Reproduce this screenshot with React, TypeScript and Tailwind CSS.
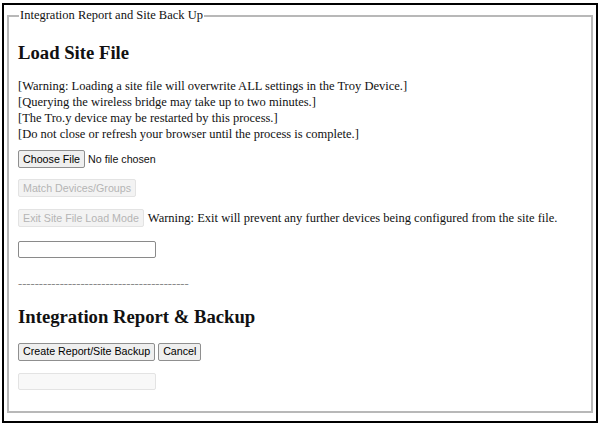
import React from "react";

const serif = "font-['Times_New_Roman','Liberation_Serif',serif]";
const sans = "font-['Arial','Liberation_Sans',sans-serif]";

function Btn({ children, disabled }: { children: React.ReactNode; disabled?: boolean }) {
  return (
    <button
      type="button"
      disabled={disabled}
      className={
        `${sans} h-[18px] rounded-[2px] border px-[4px] text-[10.7px] leading-none ` +
        (disabled
          ? "border-[#e3e3e3] bg-[#f3f3f3] text-[#b5b5b5]"
          : "border-[#8f8f8f] bg-[#efefef] text-black")
      }
    >
      {children}
    </button>
  );
}

export default function App() {
  return (
    <div className="h-[427px] w-[605px] bg-white pl-[2px] pt-[3px]">
      <div className="h-[420px] w-[596px] border-2 border-black p-[3px]">
        <fieldset className={`${serif} h-[405px] border-2 border-[#b8b8b8] px-[9px] text-[12.5px] text-[#111]`}>
          <legend className="ml-[1px] px-[1px] text-[12.5px] leading-[15px]">
            Integration Report and Site Back Up
          </legend>

          <h3 className="mt-[19px] text-[18.7px] font-bold leading-[22px]">Load Site File</h3>

          <div className="mt-[14px] leading-[16px]">
            <p>[Warning: Loading a site file will overwrite ALL settings in the Troy Device.]</p>
            <p>[Querying the wireless bridge may take up to two minutes.]</p>
            <p>[The Tro.y device may be restarted by this process.]</p>
            <p>[Do not close or refresh your browser until the process is complete.]</p>
          </div>

          <div className="mt-[8px] flex items-center gap-[3px]">
            <Btn>Choose File</Btn>
            <span className={`${sans} text-[10.7px]`}>No file chosen</span>
          </div>

          <div className="mt-[11px] flex">
            <Btn disabled>Match Devices/Groups</Btn>
          </div>

          <div className="mt-[12px] flex items-center gap-[4px]">
            <Btn disabled>Exit Site File Load Mode</Btn>
            <span>Warning: Exit will prevent any further devices being configured from the site file.</span>
          </div>

          <div className="mt-[13px] h-[17px] w-[138px] rounded-[2px] border border-[#8a8a8a] bg-white" />

          <p className="mt-[18px] leading-[16px] text-[#8a8a8a]">-----------------------------------------</p>

          <h3 className="mt-[14px] text-[18.7px] font-bold leading-[22px]">Integration Report &amp; Backup</h3>

          <div className="mt-[15px] flex items-center gap-[3px]">
            <Btn>Create Report/Site Backup</Btn>
            <Btn>Cancel</Btn>
          </div>

          <div className="mt-[12px] h-[17px] w-[138px] rounded-[2px] border border-[#e3e3e3] bg-[#f8f8f8]" />
        </fieldset>
      </div>
    </div>
  );
}
